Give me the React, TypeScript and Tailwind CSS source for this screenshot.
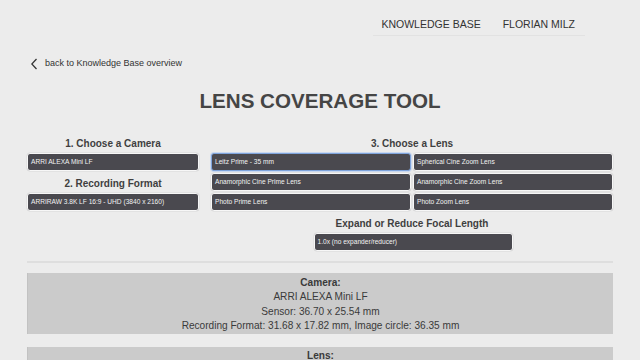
import React from "react";

const Sel = ({ label, focus = false }: { label: string; focus?: boolean }) => (
  <div
    className={
      "h-[18px] rounded-[3px] bg-[#4a494f] flex items-center pl-[3px] text-[6.6px] text-[#f2f2f2] whitespace-nowrap overflow-hidden " +
      (focus
        ? "border border-[#7fa4dc] shadow-[0_0_0_1px_#c9d8f0]"
        : "border border-[#f7f7f7] shadow-[0_0_0_0.5px_#d8d8d8]")
    }
  >
    {label}
  </div>
);

const H = ({ children, className = "" }: { children: React.ReactNode; className?: string }) => (
  <div className={"h-[14px] leading-[14px] text-center font-bold text-[10px] text-[#3f3f3f] " + className}>
    {children}
  </div>
);

export default function App() {
  return (
    <div
      className="h-[360px] overflow-hidden w-[640px] bg-[#ececec] text-[#333]"
      style={{ fontFamily: '"Liberation Sans", Arial, sans-serif' }}
    >
      <div className="flex justify-end pr-[55px]">
        <div className="flex gap-[22px] pt-[17px] pb-[4px] pl-[8px] pr-[10px] border-b border-[#e2e2e2] text-[10.5px] leading-[14px] text-[#333] uppercase">
          <span>Knowledge Base</span>
          <span>Florian Milz</span>
        </div>
      </div>

      <div className="mx-auto w-[586px]">
        <div className="mt-[22px] flex items-center h-[12px] pl-[4px] text-[9px] text-[#333]">
          <svg width="7" height="12" viewBox="0 0 7 12" className="mr-[7px]">
            <path d="M5.5 1 L0.8 6 L5.5 11" fill="none" stroke="#333" strokeWidth="1.3" />
          </svg>
          <span>back to Knowledge Base overview</span>
        </div>

        <div className="mt-[19px] h-[24px] leading-[24px] text-center font-bold text-[20.6px] text-[#454545]">
          LENS COVERAGE TOOL
        </div>

        <div className="mt-[24px] flex gap-[12px]">
          <div className="w-[172px] flex flex-col">
            <H className="mb-[2px]">1. Choose a Camera</H>
            <Sel label="ARRI ALEXA Mini LF" />
            <H className="mt-[6px] mb-[2px]">2. Recording Format</H>
            <Sel label="ARRIRAW 3.8K LF 16:9 - UHD (3840 x 2160)" />
          </div>
          <div className="flex-1 flex flex-col">
            <H className="mb-[2px]">3. Choose a Lens</H>
            <div className="grid grid-cols-2 gap-[2px]">
              <Sel label="Leitz Prime - 35 mm" focus />
              <Sel label="Spherical Cine Zoom Lens" />
              <Sel label="Anamorphic Cine Prime Lens" />
              <Sel label="Anamorphic Cine Zoom Lens" />
              <Sel label="Photo Prime Lens" />
              <Sel label="Photo Zoom Lens" />
            </div>
            <H className="mt-[6px] mb-[2px]">Expand or Reduce Focal Length</H>
            <div className="flex justify-center pl-[2px]">
              <div className="w-[199px]">
                <Sel label="1.0x (no expander/reducer)" />
              </div>
            </div>
          </div>
        </div>

        <div className="mt-[10px] h-[2px] bg-[#dedede]" />

        <div className="mt-[10px] bg-[#cbcbcb] border-l border-[#c2c2c2] pt-[3px] pb-0 text-center text-[10.1px] leading-[14.4px] text-[#3a3a3a]">
          <div className="font-bold">Camera:</div>
          <div>ARRI ALEXA Mini LF</div>
          <div>Sensor: 36.70 x 25.54 mm</div>
          <div>Recording Format: 31.68 x 17.82 mm, Image circle: 36.35 mm</div>
        </div>

        <div className="mt-[13px] bg-[#cbcbcb] border-l border-[#c2c2c2] pt-[2px] text-center text-[10.1px] leading-[14.4px] text-[#3a3a3a]">
          <div className="font-bold">Lens:</div>
        </div>
      </div>
    </div>
  );
}
